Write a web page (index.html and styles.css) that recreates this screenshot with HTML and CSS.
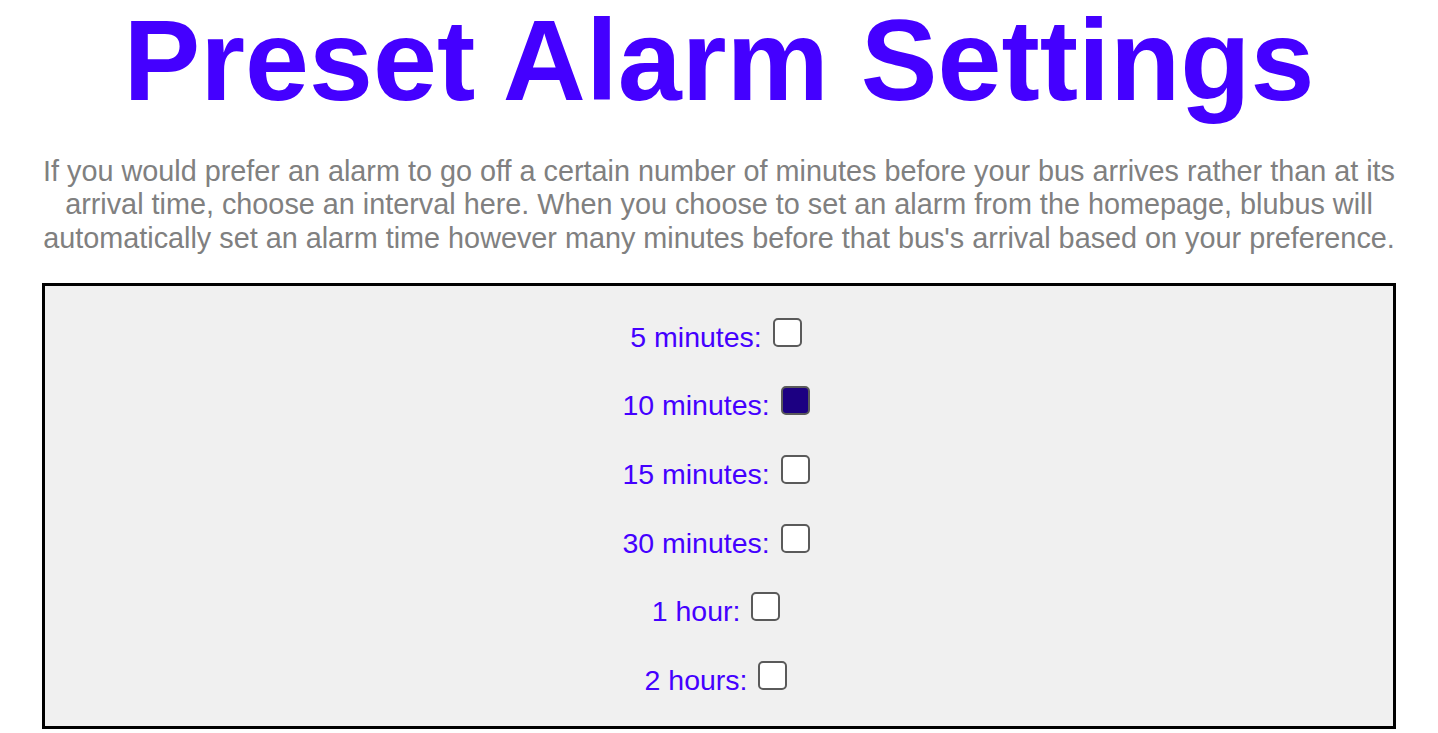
FILE: index.html
```html
<!DOCTYPE html>
<html lang="en">
<head>
<meta charset="utf-8">
<title>Preset Alarm Settings</title>
<link rel="stylesheet" href="styles.css">
</head>
<body>
<main class="page">
  <h1 class="title">Preset Alarm Settings</h1>
  <p class="intro">If you would prefer an alarm to go off a certain number of minutes before your bus arrives rather than at its arrival time, choose an interval here. When you choose to set an alarm from the homepage, blubus will automatically set an alarm time however many minutes before that bus's arrival based on your preference.</p>
  <form class="options">
    <div class="row"><label>5 minutes: <input type="checkbox" class="check"></label></div>
    <div class="row"><label>10 minutes: <input type="checkbox" class="check" checked></label></div>
    <div class="row"><label>15 minutes: <input type="checkbox" class="check"></label></div>
    <div class="row"><label>30 minutes: <input type="checkbox" class="check"></label></div>
    <div class="row"><label>1 hour: <input type="checkbox" class="check"></label></div>
    <div class="row"><label>2 hours: <input type="checkbox" class="check"></label></div>
  </form>
</main>
</body>
</html>
```
FILE: styles.css
```css
html, body {
  margin: 0;
  padding: 0;
  background: #ffffff;
}

body {
  font-family: "Liberation Sans", Arial, sans-serif;
}

.page {
  padding: 0 42px;
}

.title {
  margin: 0;
  font-size: 115px;
  line-height: 120px;
  font-weight: bold;
  color: #4400ff;
  text-align: center;
}

.intro {
  margin: 35px -12px 0;
  font-size: 28.8px;
  line-height: 33.3px;
  color: #808080;
  text-align: center;
}

.options {
  margin: 28px 0 0;
  border: 3px solid #000000;
  background: #f0f0f0;
  padding: 17px 0 12px;
}

.row {
  text-align: center;
  font-size: 28.5px;
  line-height: 68.6px;
  color: #4400ff;
}

.check {
  -webkit-appearance: none;
  appearance: none;
  display: inline-block;
  box-sizing: border-box;
  width: 29px;
  height: 29px;
  margin: 0 6px 0 3px;
  vertical-align: baseline;
  border: 2px solid #5a5a5a;
  border-radius: 5px;
  background: #ffffff;
}

.check:checked {
  background: #1c0082;
}
```
